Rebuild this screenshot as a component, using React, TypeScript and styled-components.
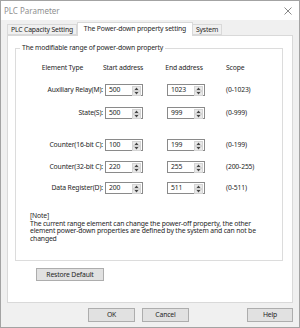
import React from 'react';
import styled, { createGlobalStyle } from 'styled-components';

const Global = createGlobalStyle`
  html, body { margin: 0; padding: 0; background: #ffffff; }
  body { font-family: "Noto Sans", "Open Sans", sans-serif; }
  #root { width: 300px; height: 328px; }
  * { box-sizing: border-box; }
`;

const Window = styled.div`
  width: 300px;
  height: 328px;
  border: 1px solid #a3a3a3;
  background: #f0f0f0;
  display: flex;
  flex-direction: column;
  font-size: 6.8px;
  letter-spacing: -0.15px;
  line-height: 8px;
  color: #1e1e1e;
`;

const TitleBar = styled.div`
  height: 19px;
  flex: none;
  background: #ffffff;
  display: flex;
  align-items: center;
  justify-content: space-between;
  padding: 0 7px 0 3px;
`;

const Title = styled.span`
  font-size: 8px;
  letter-spacing: 0;
  color: #8f8f8f;
`;

const Body = styled.div`
  flex: 1;
  display: flex;
  flex-direction: column;
  padding: 2px 6px 0 6px;
`;

const TabRow = styled.div`
  display: flex;
  align-items: flex-end;
  height: 13px;
  position: relative;
  z-index: 1;
`;

const Tab = styled.div<{ $w: number; $active?: boolean }>`
  width: ${(p) => p.$w}px;
  height: ${(p) => (p.$active ? 14 : 11)}px;
  margin-bottom: ${(p) => (p.$active ? -1 : 0)}px;
  border: 1px solid #d9d9d9;
  border-bottom: ${(p) => (p.$active ? 'none' : '1px solid #d9d9d9')};
  border-left: ${(p) => (p.$active ? '1px solid #d9d9d9' : 'none')};
  background: ${(p) => (p.$active ? '#ffffff' : '#f0f0f0')};
  display: flex;
  align-items: center;
  justify-content: center;
  white-space: nowrap;
  padding-bottom: ${(p) => (p.$active ? 2 : 0)}px;
  &:first-child { border-left: 1px solid #d9d9d9; }
`;

const Panel = styled.div`
  height: 268px;
  border: 1px solid #d9d9d9;
  background: #ffffff;
  padding: 12px 9px 0 7px;
  display: flex;
  flex-direction: column;
`;

const GroupBox = styled.div`
  position: relative;
  height: 213px;
  flex: none;
  border: 1px solid #dcdcdc;
  display: flex;
  flex-direction: column;
  padding-top: 13px;
`;

const Legend = styled.span`
  position: absolute;
  left: 4px;
  top: -5px;
  padding: 0 2px;
  background: #ffffff;
  white-space: nowrap;
`;

const Grid = styled.div<{ $top?: number }>`
  display: grid;
  grid-template-columns: 89px 38px 24px 38px 21px 1fr;
  height: 12px;
  align-items: center;
  margin-top: ${(p) => p.$top ?? 0}px;
`;

const Head = styled.span<{ $col: number; $shift?: number }>`
  grid-column: ${(p) => p.$col};
  justify-self: center;
  white-space: nowrap;
  position: relative;
  left: ${(p) => p.$shift ?? 0}px;
`;

const ScopeHead = styled.span`
  grid-column: 6;
  white-space: nowrap;
`;

const Label = styled.span`
  grid-column: 1;
  justify-self: end;
  padding-right: 2px;
  white-space: nowrap;
`;

const Spin = styled.div<{ $col: number }>`
  grid-column: ${(p) => p.$col};
  height: 12px;
  border: 1px solid #8a8a8a;
  background: #ffffff;
  display: flex;
  align-items: stretch;
`;

const SpinValue = styled.span`
  flex: 1;
  padding-left: 3px;
  display: flex;
  align-items: center;
`;

const SpinButtons = styled.div`
  width: 9px;
  margin: 1px;
  display: flex;
  flex-direction: column;
`;

const SpinHalf = styled.div`
  flex: 1;
  background: #e8e8e8;
  border: 1px solid #d4d4d4;
  display: flex;
  align-items: center;
  justify-content: center;
`;

const Scope = styled.span`
  grid-column: 6;
  white-space: nowrap;
`;

const Note = styled.div`
  margin: 18px 0 0 14px;
  line-height: 7.5px;
  width: 236px;
`;

const Button = styled.div<{ $w: number; $h: number }>`
  width: ${(p) => p.$w}px;
  height: ${(p) => p.$h}px;
  border: 1px solid #adadad;
  background: #e1e1e1;
  display: flex;
  align-items: center;
  justify-content: center;
  white-space: nowrap;
`;

const RestoreWrap = styled.div`
  margin: 7px 0 0 21px;
`;

const Footer = styled.div`
  display: flex;
  margin-top: 5px;
  padding-left: 81px;
`;

const Gap = styled.div<{ $w: number }>`
  width: ${(p) => p.$w}px;
  flex: none;
`;

const Arrow = ({ up }: { up?: boolean }) => (
  <svg width="5" height="3" viewBox="0 0 5 3">
    <polygon points={up ? '0.5,3 2.5,0.5 4.5,3' : '0.5,0 2.5,2.5 4.5,0'} fill="#444" />
  </svg>
);

const SpinBox = ({ col, value }: { col: number; value: string }) => (
  <Spin $col={col}>
    <SpinValue>{value}</SpinValue>
    <SpinButtons>
      <SpinHalf><Arrow up /></SpinHalf>
      <SpinHalf><Arrow /></SpinHalf>
    </SpinButtons>
  </Spin>
);

const rows = [
  { label: 'Auxiliary Relay(M):', start: '500', end: '1023', scope: '(0-1023)', top: 10 },
  { label: 'State(S):', start: '500', end: '999', scope: '(0-999)', top: 11 },
  { label: 'Counter(16-bit C):', start: '100', end: '199', scope: '(0-199)', top: 20 },
  { label: 'Counter(32-bit C):', start: '220', end: '255', scope: '(200-255)', top: 10 },
  { label: 'Data Register(D):', start: '200', end: '511', scope: '(0-511)', top: 9 },
];

export default function App() {
  return (
    <>
      <Global />
      <Window>
        <TitleBar>
          <Title>PLC Parameter</Title>
          <svg width="8" height="8" viewBox="0 0 8 8">
            <path d="M0.5 0.5 L7.5 7.5 M7.5 0.5 L0.5 7.5" stroke="#7a7a7a" strokeWidth="0.9" />
          </svg>
        </TitleBar>
        <Body>
          <TabRow>
            <Tab $w={70}>PLC Capacity Setting</Tab>
            <Tab $w={116} $active>The Power-down property setting</Tab>
            <Tab $w={29}>System</Tab>
          </TabRow>
          <Panel>
            <GroupBox>
              <Legend>The modifiable range of power-down property</Legend>
              <Grid>
                <Head $col={1} $shift={2}>Element Type</Head>
                <Head $col={2} $shift={-1}>Start address</Head>
                <Head $col={4} $shift={-2}>End address</Head>
                <ScopeHead>Scope</ScopeHead>
              </Grid>
              {rows.map((r) => (
                <Grid key={r.label} $top={r.top}>
                  <Label>{r.label}</Label>
                  <SpinBox col={2} value={r.start} />
                  <SpinBox col={4} value={r.end} />
                  <Scope>{r.scope}</Scope>
                </Grid>
              ))}
              <Note>
                [Note]
                <br />
                The current range element can change the power-off property, the other element power-down properties are defined by the system and can not be changed
              </Note>
            </GroupBox>
            <RestoreWrap>
              <Button $w={68} $h={13}>Restore Default</Button>
            </RestoreWrap>
          </Panel>
          <Footer>
            <Button $w={47} $h={14}>OK</Button>
            <Gap $w={7} />
            <Button $w={47} $h={14}>Cancel</Button>
            <Gap $w={58} />
            <Button $w={46} $h={14}>Help</Button>
          </Footer>
        </Body>
      </Window>
    </>
  );
}
